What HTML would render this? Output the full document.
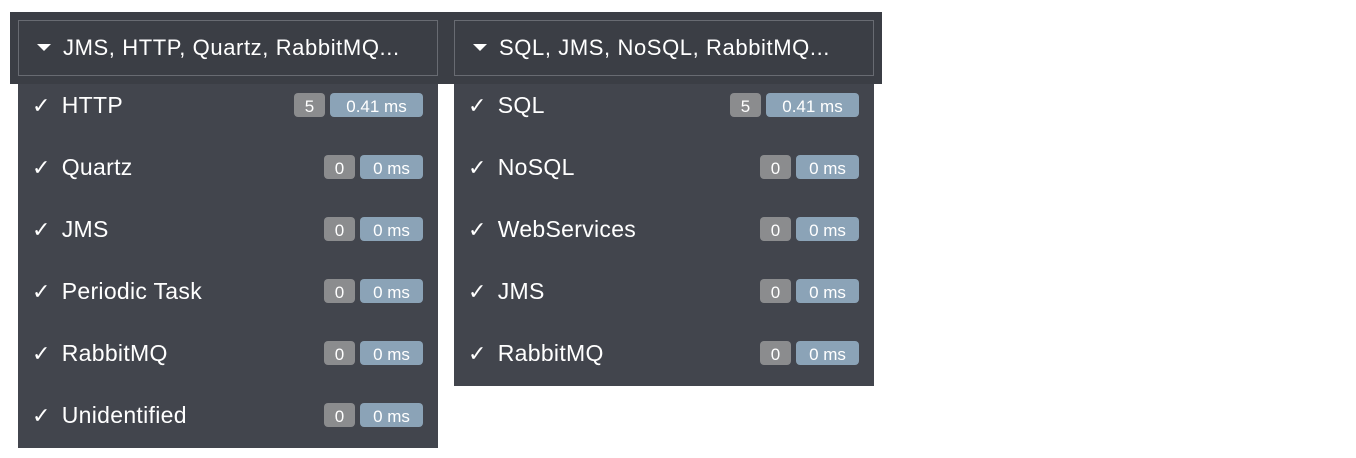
<!DOCTYPE html>
<html><head><style>
body{margin:0;width:1356px;height:458px;background:#fff;position:relative;overflow:hidden;font-family:"Liberation Sans",Arial,sans-serif;}
.bar{position:absolute;left:10px;top:12px;width:872px;height:72px;background:#3b3e45;}
.btn{position:absolute;top:20px;border:1px solid #686b72;color:#fff;font-size:22px;letter-spacing:0.6px;line-height:54px;box-sizing:border-box;height:56px;}
.btn .tri{display:inline-block;width:0;height:0;border-left:7px solid transparent;border-right:7px solid transparent;border-top:7px solid #fff;margin:0 12px 3px 18px;vertical-align:middle;}
.dd{position:absolute;top:84px;width:420px;background:#42454d;}
.row{position:relative;height:62px;color:#fff;font-size:23px;letter-spacing:0.3px;}
.row .t{position:absolute;left:14px;top:8px;}
.row .c{font-size:22px;margin-right:11px;}
.b{position:absolute;top:9px;height:24px;line-height:27px;border-radius:4px;color:#fff;font-size:17px;text-align:center;letter-spacing:0;}
.n{background:#8b8c8e;width:31px;}
.m{background:#8ba3b7;}
</style></head><body>
<div class="bar"></div>
<div class="btn" style="left:18px;width:420px"><span class="tri"></span>JMS, HTTP, Quartz, RabbitMQ...</div>
<div class="btn" style="left:454px;width:420px"><span class="tri"></span>SQL, JMS, NoSQL, RabbitMQ...</div>
<div class="dd" style="left:18px;height:364px">
<div class="row"><span class="t"><span class="c">✓</span>HTTP</span><span class="b n" style="left:276px">5</span><span class="b m" style="left:312px;width:93px">0.41 ms</span></div>
<div class="row"><span class="t"><span class="c">✓</span>Quartz</span><span class="b n" style="left:306px">0</span><span class="b m" style="left:342px;width:63px">0 ms</span></div>
<div class="row"><span class="t"><span class="c">✓</span>JMS</span><span class="b n" style="left:306px">0</span><span class="b m" style="left:342px;width:63px">0 ms</span></div>
<div class="row"><span class="t"><span class="c">✓</span>Periodic Task</span><span class="b n" style="left:306px">0</span><span class="b m" style="left:342px;width:63px">0 ms</span></div>
<div class="row"><span class="t"><span class="c">✓</span>RabbitMQ</span><span class="b n" style="left:306px">0</span><span class="b m" style="left:342px;width:63px">0 ms</span></div>
<div class="row"><span class="t"><span class="c">✓</span>Unidentified</span><span class="b n" style="left:306px">0</span><span class="b m" style="left:342px;width:63px">0 ms</span></div>
</div>
<div class="dd" style="left:454px;height:302px">
<div class="row"><span class="t"><span class="c">✓</span>SQL</span><span class="b n" style="left:276px">5</span><span class="b m" style="left:312px;width:93px">0.41 ms</span></div>
<div class="row"><span class="t"><span class="c">✓</span>NoSQL</span><span class="b n" style="left:306px">0</span><span class="b m" style="left:342px;width:63px">0 ms</span></div>
<div class="row"><span class="t"><span class="c">✓</span>WebServices</span><span class="b n" style="left:306px">0</span><span class="b m" style="left:342px;width:63px">0 ms</span></div>
<div class="row"><span class="t"><span class="c">✓</span>JMS</span><span class="b n" style="left:306px">0</span><span class="b m" style="left:342px;width:63px">0 ms</span></div>
<div class="row"><span class="t"><span class="c">✓</span>RabbitMQ</span><span class="b n" style="left:306px">0</span><span class="b m" style="left:342px;width:63px">0 ms</span></div>
</div>
</body></html>
